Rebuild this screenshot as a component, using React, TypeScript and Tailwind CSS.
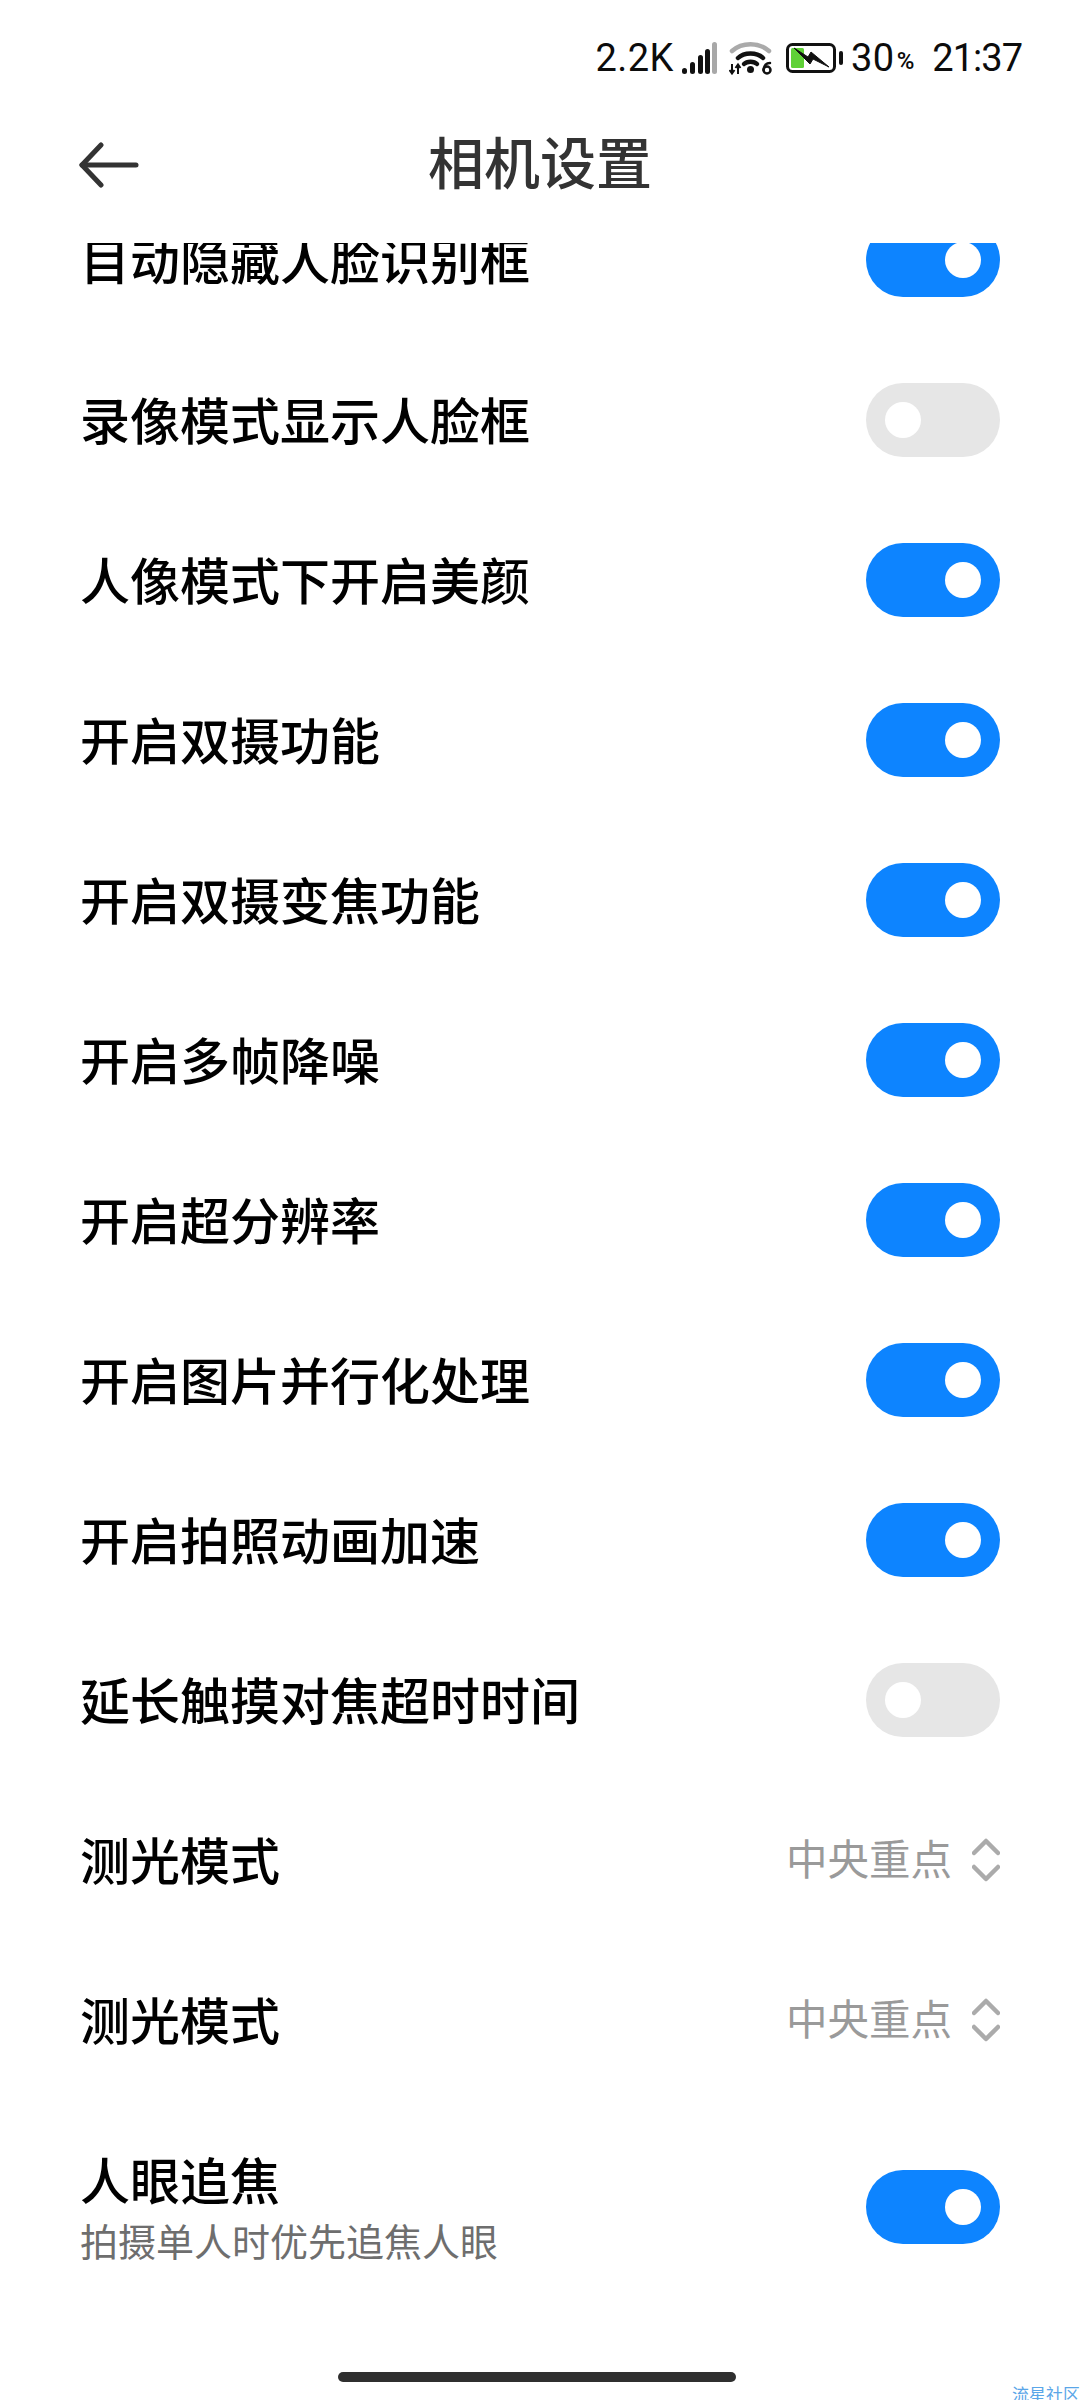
const cjk = { fontFamily: '"Noto Sans CJK SC", "Noto Sans", sans-serif' };

function Toggle({ on = true }: { on?: boolean }) {
  return (
    <div className={`flex h-[74px] w-[134px] shrink-0 items-center rounded-full ${on ? "justify-end bg-[#0d84ff] pr-[19px]" : "justify-start bg-[#e6e6e6] pl-[19px]"}`}>
      <div className="h-[36px] w-[36px] rounded-full bg-white" />
    </div>
  );
}

function Row({ label, on = true }: { label: string; on?: boolean }) {
  return (
    <div className="flex h-[160px] items-center justify-between">
      <span className="pb-[5px] text-[50px] font-medium leading-none text-black">{label}</span>
      <Toggle on={on} />
    </div>
  );
}

function SelectRow({ label }: { label: string }) {
  return (
    <div className="flex h-[160px] items-center justify-between">
      <span className="pb-[5px] text-[50px] font-medium leading-none text-black">{label}</span>
      <div className="flex items-center gap-[20px]">
        <span className="pb-[4px] text-[41.5px] leading-none text-[#9a9a9a]">中央重点</span>
        <svg width="28" height="44" viewBox="0 0 28 44" fill="none" stroke="#ababab" strokeWidth="4.5" strokeLinecap="round" strokeLinejoin="round">
          <path d="M2 15 L14 3 L26 15" />
          <path d="M2 29 L14 41 L26 29" />
        </svg>
      </div>
    </div>
  );
}

function StatusBar() {
  const num = { fontFamily: 'Roboto, "Noto Sans", sans-serif' };
  return (
    <div className="flex h-[112px] items-center justify-end pr-[58px] pt-[3px] text-[#0c0c0c]" style={num}>
      <span className="text-[38px] leading-none tracking-[0.5px]">2.2K</span>
      <svg className="ml-[8px]" width="35" height="32" viewBox="0 0 35 32">
        <rect x="0" y="26" width="5" height="6" rx="2.5" fill="#111" />
        <rect x="8" y="20" width="5" height="12" rx="2.5" fill="#111" />
        <rect x="16" y="13" width="5" height="19" rx="2.5" fill="#111" />
        <rect x="23" y="7" width="5" height="25" rx="2.5" fill="#111" />
        <rect x="30" y="0" width="5" height="32" rx="2.5" fill="#a8a8a8" />
      </svg>
      <svg className="ml-[12px]" width="43" height="34" viewBox="0 0 43 34" fill="none">
        <path d="M3 10 C13 1 30 1 40 10" stroke="#aaa" strokeWidth="4.5" strokeLinecap="round" />
        <path d="M9 17 C15 11 28 11 34 17" stroke="#111" strokeWidth="4.5" strokeLinecap="round" />
        <path d="M15 23 C18 20 25 20 28 23" stroke="#111" strokeWidth="4.5" strokeLinecap="round" />
        <circle cx="21.5" cy="28.5" r="3.5" fill="#111" />
        <path d="M9 24 V33 M6.5 27 L9 23.5 L11.5 27 M3 23 V32 M0.5 29 L3 32.5 L5.5 29" stroke="#111" strokeWidth="2" />
        <circle cx="38" cy="29" r="3.5" stroke="#111" strokeWidth="2.5" />
        <path d="M41 22 C37 22 35 25 34.5 29" stroke="#111" strokeWidth="2.5" strokeLinecap="round" />
      </svg>
      <svg className="ml-[14px]" width="57" height="30" viewBox="0 0 57 30" fill="none">
        <rect x="1.5" y="1.5" width="47" height="27" rx="5" stroke="#111" strokeWidth="3" />
        <rect x="5" y="5" width="13" height="20" rx="1.5" fill="#5fd137" />
        <rect x="53" y="8" width="4" height="14" rx="2" fill="#111" />
        <path d="M8 5 L22 14 L25 9 L43 24 L27 16 L24 21 Z" fill="#111" stroke="#111" strokeWidth="1" strokeLinejoin="round" />
      </svg>
      <span className="ml-[8px] text-[38px] leading-none tracking-[0.5px]">30</span>
      <span className="ml-[2px] mt-[7px] text-[24px] font-medium leading-none">%</span>
      <span className="ml-[18px] text-[38px] leading-none tracking-[-1px]">21:37</span>
    </div>
  );
}

function Header() {
  return (
    <div className="relative flex h-[108px] items-center justify-center">
      <svg className="absolute left-[79px] top-[30px]" width="60" height="46" viewBox="0 0 60 46" fill="none" stroke="#333" strokeWidth="5" strokeLinecap="round" strokeLinejoin="round">
        <path d="M22 3 L3 23 L22 43" />
        <path d="M3 23 H57" />
      </svg>
      <h1 className="pb-[12px] text-[56px] font-medium leading-none text-[#333]">相机设置</h1>
    </div>
  );
}

export default function App() {
  return (
    <div className="relative flex h-[2400px] w-[1080px] flex-col overflow-hidden bg-white" style={cjk}>
      <StatusBar />
      <Header />
      <div className="h-[23px] shrink-0" />
      <div className="flex-1 overflow-hidden">
        <div className="-mt-[63px] pl-[80px] pr-[80px]">
          <Row label="目动隐藏人脸识别框" />
          <Row label="录像模式显示人脸框" on={false} />
          <Row label="人像模式下开启美颜" />
          <Row label="开启双摄功能" />
          <Row label="开启双摄变焦功能" />
          <Row label="开启多帧降噪" />
          <Row label="开启超分辨率" />
          <Row label="开启图片并行化处理" />
          <Row label="开启拍照动画加速" />
          <Row label="延长触摸对焦超时时间" on={false} />
          <SelectRow label="测光模式" />
          <SelectRow label="测光模式" />
          <div className="flex h-[214px] items-center justify-between">
            <div className="flex flex-col gap-[18px] pb-[2px]">
              <span className="text-[50px] font-medium leading-none text-black">人眼追焦</span>
              <span className="text-[38px] leading-none text-[#6e6e6e]">拍摄单人时优先追焦人眼</span>
            </div>
            <Toggle />
          </div>
        </div>
      </div>
      <div className="absolute bottom-[18px] left-[338px] h-[10px] w-[398px] rounded-full bg-[#2f2f2f]" />
      <span className="absolute -bottom-[2px] right-0 text-[17px] leading-none text-[#5aa6e8]">流星社区</span>
    </div>
  );
}
